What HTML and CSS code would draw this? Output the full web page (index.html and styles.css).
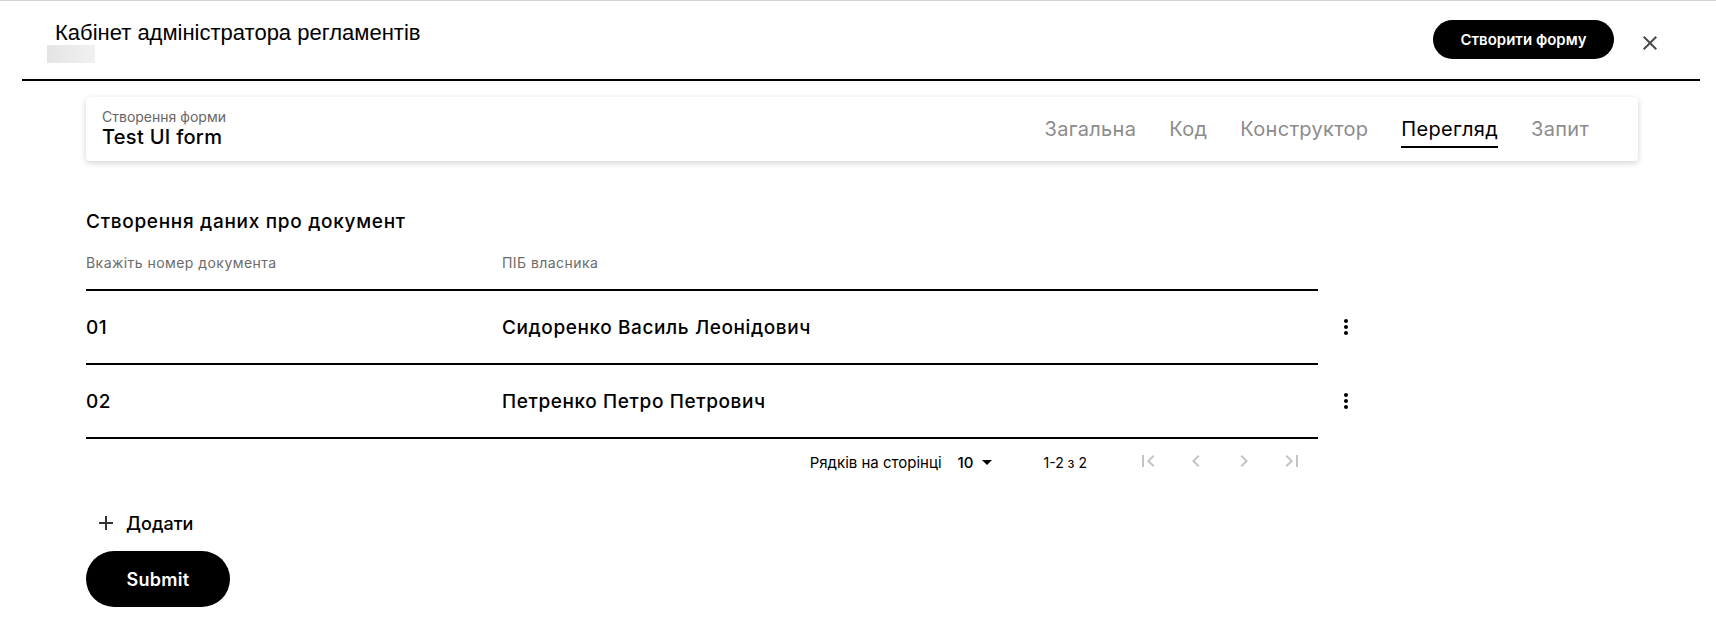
FILE: index.html
```html
<!DOCTYPE html>
<html lang="uk">
<head>
    <meta charset="UTF-8">
    <meta name="viewport" content="width=device-width, initial-scale=1.0">
    <title>Кабінет адміністратора регламентів</title>
    <link rel="stylesheet" href="styles.css">
</head>
<body>
    <!-- Top bar -->
    <header class="topbar">
        <div class="topbar-left">
            <div class="app-title">Кабінет адміністратора регламентів</div>
            <div class="user-placeholder"></div>
        </div>
        <div class="topbar-right">
            <button class="btn-create">Створити форму</button>
            <button class="btn-close" title="Закрити">
                <svg viewBox="0 0 24 24" width="24" height="24"><path d="M19 6.41L17.59 5 12 10.59 6.41 5 5 6.41 10.59 12 5 17.59 6.41 19 12 13.41 17.59 19 19 17.59 13.41 12z"/></svg>
            </button>
        </div>
    </header>

    <main class="page">
        <!-- Form header card with tabs -->
        <div class="form-card">
            <div class="form-name">
                <span class="form-label">Створення форми</span>
                <span class="form-title">Test UI form</span>
            </div>
            <nav class="tabs">
                <a class="tab">Загальна</a>
                <a class="tab">Код</a>
                <a class="tab">Конструктор</a>
                <a class="tab active">Перегляд</a>
                <a class="tab">Запит</a>
            </nav>
        </div>

        <!-- Preview of the form -->
        <section class="preview">
            <h2 class="grid-title">Створення даних про документ</h2>

            <div class="grid">
                <div class="grid-row head">
                    <div class="cells">
                        <div class="cell">Вкажіть номер документа</div>
                        <div class="cell">ПІБ власника</div>
                    </div>
                </div>
                <div class="grid-row">
                    <div class="cells">
                        <div class="cell">01</div>
                        <div class="cell">Сидоренко Василь Леонідович</div>
                    </div>
                    <button class="row-menu">
                        <svg viewBox="0 0 24 24" width="24" height="24"><path d="M12 8c1.1 0 2-.9 2-2s-.9-2-2-2-2 .9-2 2 .9 2 2 2zm0 2c-1.1 0-2 .9-2 2s.9 2 2 2 2-.9 2-2-.9-2-2-2zm0 6c-1.1 0-2 .9-2 2s.9 2 2 2 2-.9 2-2-.9-2-2-2z"/></svg>
                    </button>
                </div>
                <div class="grid-row">
                    <div class="cells">
                        <div class="cell">02</div>
                        <div class="cell">Петренко Петро Петрович</div>
                    </div>
                    <button class="row-menu">
                        <svg viewBox="0 0 24 24" width="24" height="24"><path d="M12 8c1.1 0 2-.9 2-2s-.9-2-2-2-2 .9-2 2 .9 2 2 2zm0 2c-1.1 0-2 .9-2 2s.9 2 2 2 2-.9 2-2-.9-2-2-2zm0 6c-1.1 0-2 .9-2 2s.9 2 2 2 2-.9 2-2-.9-2-2-2z"/></svg>
                    </button>
                </div>

                <div class="pagination">
                    <span class="rows-label">Рядків на сторінці</span>
                    <span class="rows-select">10
                        <svg viewBox="0 0 24 24" width="24" height="24"><path d="M7 10l5 5 5-5z"/></svg>
                    </span>
                    <span class="range">1-2 з 2</span>
                    <button class="page-btn" disabled>
                        <svg viewBox="0 0 24 24" width="24" height="24"><path d="M18.41 16.59L13.82 12l4.59-4.59L17 6l-6 6 6 6zM6 6h2v12H6z"/></svg>
                    </button>
                    <button class="page-btn" disabled>
                        <svg viewBox="0 0 24 24" width="24" height="24"><path d="M15.41 7.41L14 6l-6 6 6 6 1.41-1.41L10.83 12z"/></svg>
                    </button>
                    <button class="page-btn" disabled>
                        <svg viewBox="0 0 24 24" width="24" height="24"><path d="M10 6L8.59 7.41 13.17 12l-4.58 4.59L10 18l6-6z"/></svg>
                    </button>
                    <button class="page-btn" disabled>
                        <svg viewBox="0 0 24 24" width="24" height="24"><path d="M5.59 7.41L10.18 12l-4.59 4.59L7 18l6-6-6-6zM16 6h2v12h-2z"/></svg>
                    </button>
                </div>
            </div>

            <button class="btn-add">
                <svg viewBox="0 0 24 24" width="24" height="24"><path d="M19 13h-6v6h-2v-6H5v-2h6V5h2v6h6v2z"/></svg>
                Додати
            </button>
            <button class="btn-submit">Submit</button>
        </section>
    </main>
</body>
</html>
```

FILE: styles.css
```css
body {
    margin: 0;
    border-top: 1px solid #d4d4d4;
    font-family: Inter, "Noto Sans", sans-serif;
    color: #000;
    background: #fff;
}
button {
    font-family: inherit;
    border: none;
    background: none;
    padding: 0;
    cursor: pointer;
}

/* Top bar */
.topbar {
    display: flex;
    justify-content: space-between;
    margin: 0 16px 0 22px;
    height: 78px;
    border-bottom: 2px solid #000;
}
.topbar-left {
    padding: 20px 0 0 25px;
}
.app-title {
    margin-left: 8px;
    font-family: "Liberation Sans", Arial, sans-serif;
    font-size: 22px;
    line-height: 24px;
}
.user-placeholder {
    width: 48px;
    height: 18px;
    background: linear-gradient(to right, #e4e4e4, #f1f1f1);
}
.topbar-right {
    display: flex;
    align-items: flex-start;
    gap: 24px;
    padding: 19px 38px 0 0;
}
.btn-create {
    height: 39px;
    width: 181px;
    border-radius: 20px;
    background: #000;
    color: #fff;
    font-size: 15px;
    font-weight: 600;
}
.btn-close {
    margin-top: 11px;
    width: 24px;
    height: 24px;
    fill: #4a4a4a;
}

.page {
    padding: 16px 78px 0 86px;
}

/* Form card */
.form-card {
    display: flex;
    justify-content: space-between;
    height: 64px;
    padding: 0 49px 0 16px;
    border-radius: 4px;
    background: #fff;
    box-shadow: 0 2px 6px rgba(0, 0, 0, 0.18);
}
.form-name {
    display: flex;
    flex-direction: column;
    justify-content: center;
}
.form-label {
    font-size: 14px;
    line-height: 16px;
    color: #666;
}
.form-title {
    font-size: 20px;
    line-height: 24px;
    font-weight: 500;
    letter-spacing: 0.3px;
}
.tabs {
    display: flex;
    align-items: flex-end;
    gap: 33px;
    padding-bottom: 13px;
}
.tab {
    font-size: 20px;
    line-height: 24px;
    letter-spacing: 0.3px;
    color: #8c8c8c;
    padding-bottom: 5px;
    border-bottom: 2px solid transparent;
    cursor: pointer;
}
.tab.active {
    color: #000;
    border-bottom-color: #000;
}

/* Preview grid */
.preview {
    width: 1288px;
}
.grid-title {
    margin: 49px 0 0;
    font-size: 19px;
    font-weight: 500;
    line-height: 24px;
    letter-spacing: 0.7px;
}
.grid-row {
    display: flex;
    align-items: center;
}
.cells {
    display: grid;
    grid-template-columns: 416px 816px;
    width: 1232px;
    border-bottom: 2px solid #000;
}
.grid-row .cells {
    height: 72px;
    align-items: center;
    font-size: 19px;
    font-weight: 500;
    letter-spacing: 0.6px;
}
.grid-row.head .cells {
    height: auto;
    margin-top: 19px;
    padding-bottom: 16px;
    font-size: 14px;
    font-weight: 400;
    line-height: 20px;
    letter-spacing: 0.45px;
    color: #6b6b6b;
}
.row-menu {
    width: 56px;
    height: 40px;
    fill: #000;
}

/* Pagination */
.pagination {
    display: flex;
    align-items: center;
    justify-content: flex-end;
    width: 1230px;
    height: 46px;
    font-size: 15px;
}
.rows-select {
    display: flex;
    align-items: center;
    margin-left: 16px;
    font-size: 15px;
    font-weight: 500;
}
.rows-select svg {
    margin-left: 2px;
}
.range {
    margin: 0 37px 0 44px;
    font-size: 14px;
}
.page-btn {
    width: 48px;
    height: 40px;
    fill: #c4c4c4;
}

/* Buttons under the grid */
.btn-add {
    display: flex;
    align-items: center;
    gap: 8px;
    height: 40px;
    margin-top: 18px;
    padding-left: 8px;
    font-size: 18px;
    font-weight: 500;
    color: #000;
    fill: #333;
}
.btn-submit {
    display: block;
    width: 144px;
    height: 56px;
    margin-top: 8px;
    border-radius: 28px;
    background: #000;
    color: #fff;
    font-size: 18px;
    font-weight: 600;
    letter-spacing: 0.3px;
}
```
